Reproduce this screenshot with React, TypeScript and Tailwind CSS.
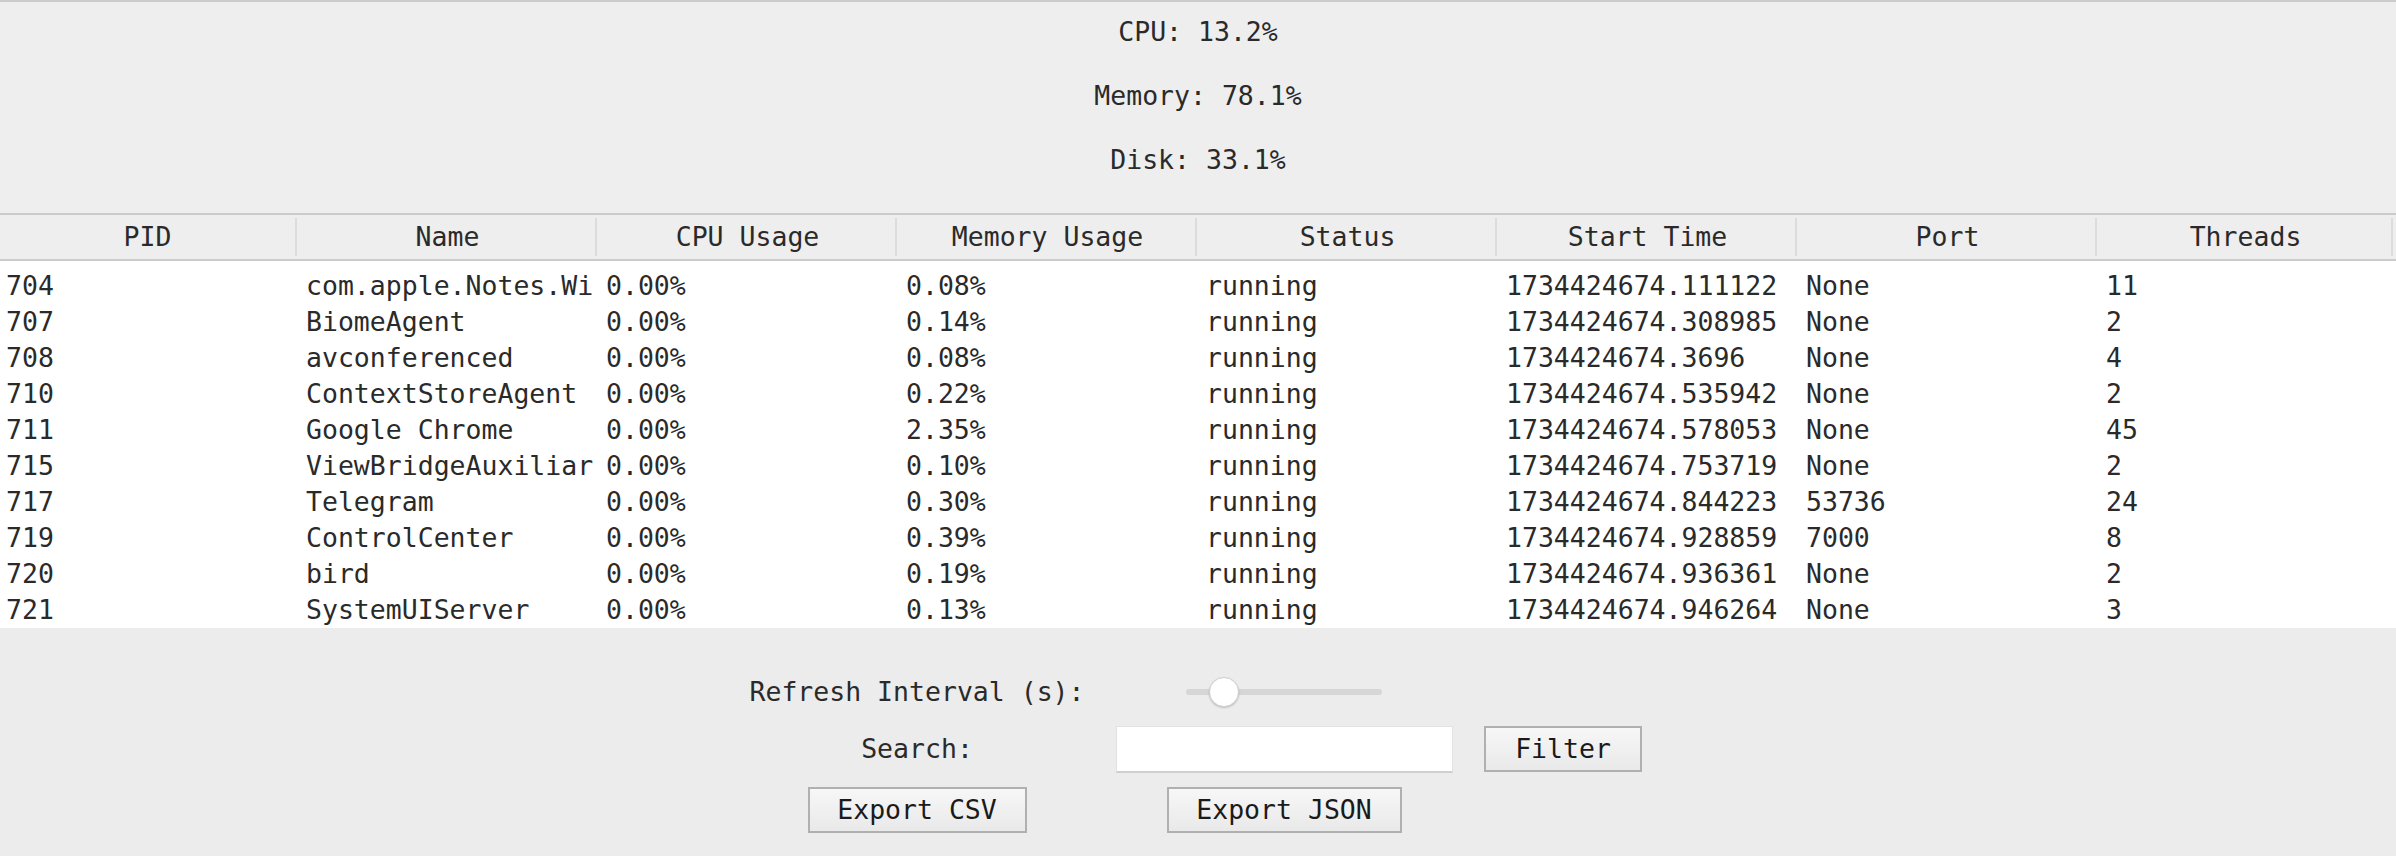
import React from "react";

const rows: string[][] = [
  ["704", "com.apple.Notes.Wi", "0.00%", "0.08%", "running", "1734424674.111122", "None", "11"],
  ["707", "BiomeAgent", "0.00%", "0.14%", "running", "1734424674.308985", "None", "2"],
  ["708", "avconferenced", "0.00%", "0.08%", "running", "1734424674.3696", "None", "4"],
  ["710", "ContextStoreAgent", "0.00%", "0.22%", "running", "1734424674.535942", "None", "2"],
  ["711", "Google Chrome", "0.00%", "2.35%", "running", "1734424674.578053", "None", "45"],
  ["715", "ViewBridgeAuxiliar", "0.00%", "0.10%", "running", "1734424674.753719", "None", "2"],
  ["717", "Telegram", "0.00%", "0.30%", "running", "1734424674.844223", "53736", "24"],
  ["719", "ControlCenter", "0.00%", "0.39%", "running", "1734424674.928859", "7000", "8"],
  ["720", "bird", "0.00%", "0.19%", "running", "1734424674.936361", "None", "2"],
  ["721", "SystemUIServer", "0.00%", "0.13%", "running", "1734424674.946264", "None", "3"],
];

const headers = ["PID", "Name", "CPU Usage", "Memory Usage", "Status", "Start Time", "Port", "Threads"];

function TkButton({ label, w }: { label: string; w: string }) {
  return (
    <button
      className={`${w} h-[46px] border-2 border-[#b0b0b0] bg-gradient-to-b from-[#f7f7f7] to-[#e9e9e9] text-[#1a1a1a] flex items-center justify-center`}
    >
      {label}
    </button>
  );
}

export default function App() {
  return (
    <div
      className="w-[2396px] h-[856px] bg-[#ececec] text-[#2a2a2a] text-[26.5px] leading-[32px] overflow-hidden flex flex-col"
      style={{ fontFamily: '"DejaVu Sans Mono", "Liberation Mono", monospace' }}
    >
      {/* Stats */}
      <div className="border-t-2 border-[#cbcbcb] bg-[#eeeeee] pt-[14px] pb-[37px] flex flex-col items-center gap-[32px]">
        <div className="h-[32px]">CPU: 13.2%</div>
        <div className="h-[32px]">Memory: 78.1%</div>
        <div className="h-[32px]">Disk: 33.1%</div>
      </div>

      {/* Table */}
      <div className="bg-white">
        <div className="flex h-[48px] border-y-2 border-[#cbcbcb] bg-[#eeeeee]">
          {headers.map((h, i) => (
            <div key={h} className={`${i === 7 ? "flex-1" : "w-[300px]"} flex items-stretch`}>
              <div className="flex-1 flex items-center justify-center">{h}</div>
              <div className="w-[2px] my-[3px] bg-[#dcdcdc]" />
              <div className="w-[3px]" />
            </div>
          ))}
        </div>
        <div className="pt-[7px]">
          {rows.map((r) => (
            <div key={r[0]} className="flex h-[36px] items-center">
              {r.map((c, i) => (
                <div
                  key={i}
                  className={`${i === 7 ? "flex-1" : "w-[300px]"} pl-[6px] overflow-hidden whitespace-nowrap`}
                >
                  {c}
                </div>
              ))}
            </div>
          ))}
        </div>
      </div>

      {/* Controls */}
      <div className="flex-1 bg-[#ececec] pt-[44px] flex justify-center">
        <div className="grid grid-cols-[355px_379px_179px] grid-rows-[40px_50px_48px] gap-y-[12px] ml-[-4px]">
          <div className="flex items-center justify-center">Refresh Interval (s):</div>
          <div className="flex items-center justify-center">
            <div className="relative w-[196px] h-[6px] rounded-full bg-[#d6d6d6]">
              <div className="absolute left-[23px] top-[-12px] w-[30px] h-[30px] rounded-full bg-white border border-[#d0d0d0] shadow-[0_1px_2px_rgba(0,0,0,0.2)]" />
            </div>
          </div>
          <div />

          <div className="flex items-center justify-center">Search:</div>
          <div className="flex items-center justify-center">
            <div className="w-[337px] h-[47px] bg-white border border-[#e2e2e2] border-b-2 border-b-[#cfcfcf]" />
          </div>
          <div className="flex items-center justify-center">
            <TkButton label="Filter" w="w-[158px]" />
          </div>

          <div className="flex items-center justify-center">
            <TkButton label="Export CSV" w="w-[219px]" />
          </div>
          <div className="flex items-center justify-center">
            <TkButton label="Export JSON" w="w-[235px]" />
          </div>
          <div />
        </div>
      </div>
    </div>
  );
}
